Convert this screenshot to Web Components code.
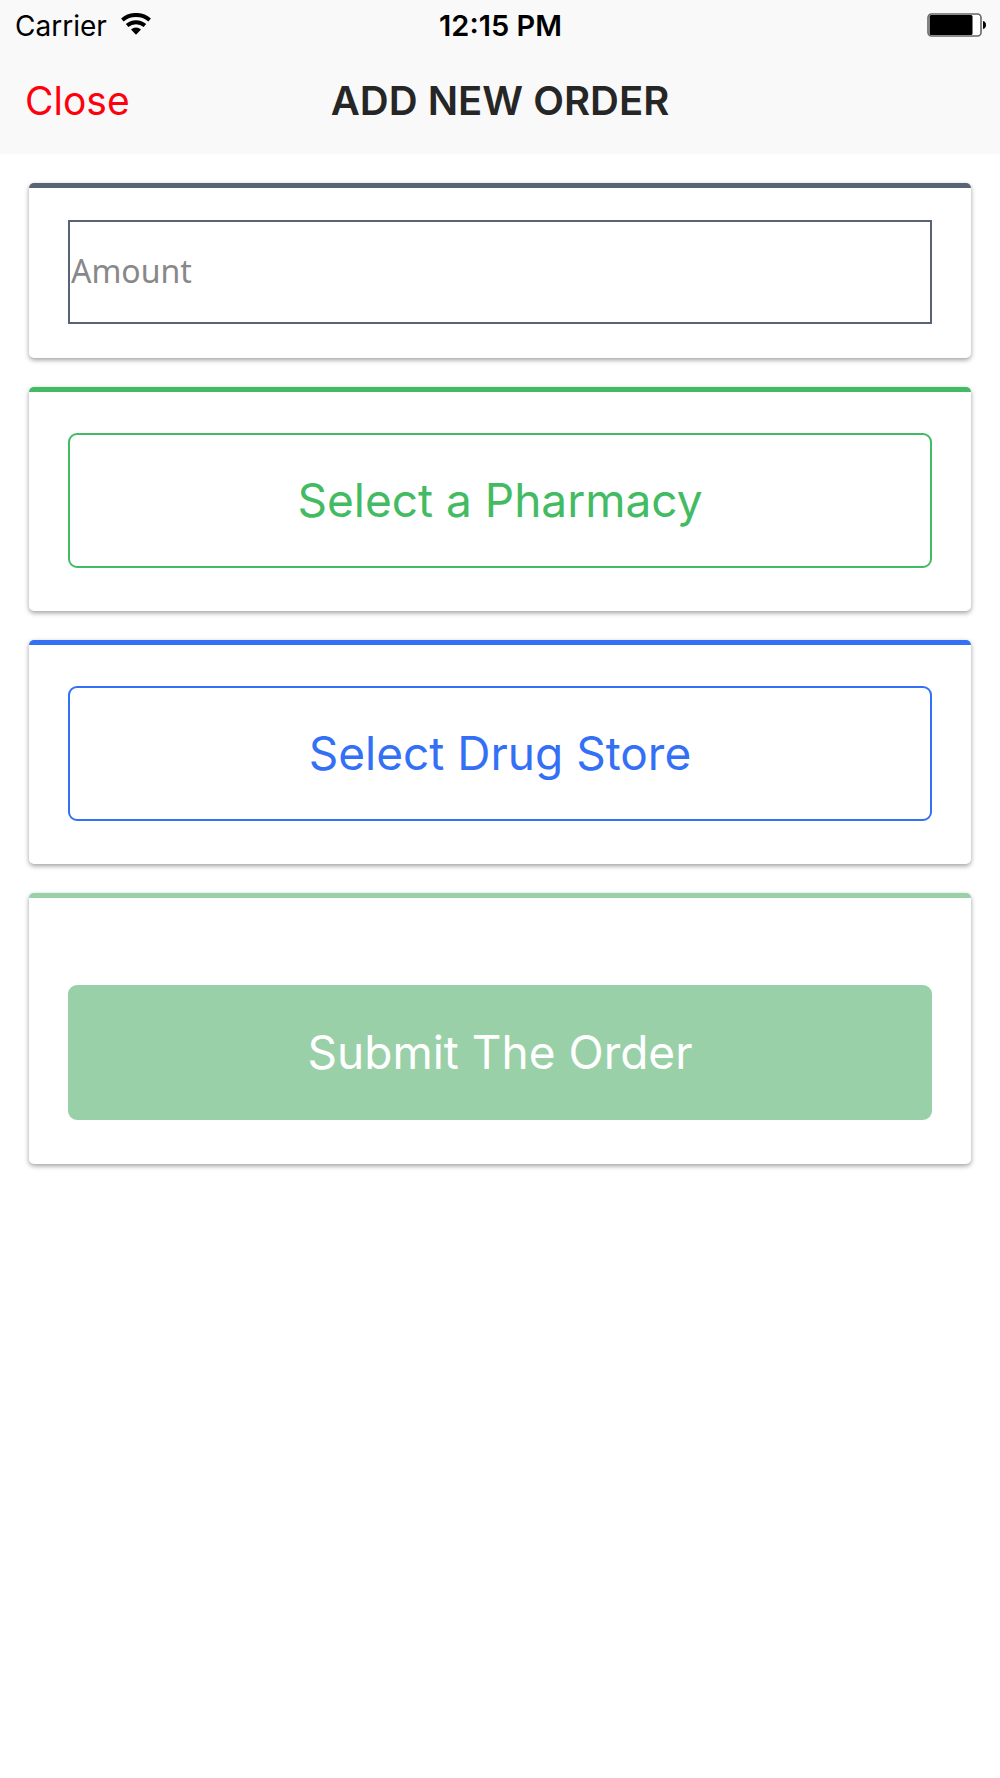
<!DOCTYPE html>
<html lang="en">
<head>
<meta charset="utf-8">
<meta name="viewport" content="width=device-width, initial-scale=1">
<title>Add New Order</title>
<style>
  body { margin: 0; background: #fff; font-family: Inter, "Liberation Sans", sans-serif; }
</style>
</head>
<body>
<order-screen></order-screen>
<script>
  function define(name, html) {
    const template = document.createElement('template');
    template.innerHTML = html;
    customElements.define(name, class extends HTMLElement {
      constructor() {
        super();
        this.attachShadow({ mode: 'open' }).append(template.content.cloneNode(true));
      }
    });
  }

  define('status-bar', `
    <style>
      :host { display: grid; grid-template-columns: 1fr auto 1fr; align-items: center; height: 52px; padding: 0 14px 0 15px; font-size: 28px; line-height: 32px; color: #000; }
      .carrier { display: flex; align-items: center; gap: 14px; }
      .carrier svg { margin-bottom: 4px; }
      .time { font-size: 29px; font-weight: 600; }
      .battery { justify-self: end; margin-bottom: 2px; }
      svg { display: block; }
    </style>
    <div class="carrier"><span>Carrier</span>
      <svg width="30" height="22" viewBox="0 0 30 22" aria-hidden="true">
        <g fill="none" stroke="#000" stroke-width="4">
          <path d="M1.400 6.900C9 .3 21 .3 28.600 6.900"/>
          <path d="M6.100 12.600C11.200 8.200 18.800 8.200 23.900 12.600"/>
        </g>
        <path d="M10 16.600C13 13.800 17 13.800 20 16.600L15 21.800Z"/>
      </svg>
    </div>
    <span class="time">12:15 PM</span>
    <svg class="battery" width="59" height="24" viewBox="0 0 59 24" aria-hidden="true">
      <rect x="1" y="1" width="53" height="22" rx="3.500" fill="#fff" stroke="#666" stroke-width="1.600"/>
      <rect x="2.500" y="2" width="43" height="20" rx="1.500"/>
      <path d="M56 8c4 .5 4 7.500 0 8z"/>
    </svg>`);

  define('nav-bar', `
    <style>
      :host { display: grid; grid-template-columns: 1fr auto 1fr; align-items: center; height: 98px; padding: 0 25px 4px; }
      h1 { margin: 0; font-size: 40px; line-height: 48px; font-weight: 600; color: #262626; }
    </style>
    <slot name="left"></slot>
    <h1><slot></slot></h1>`);

  define('text-action', `
    <style>
      :host { display: block; }
      button { padding: 0; border: 0; background: none; font: inherit; font-size: 39px; line-height: 48px; color: #ff000d; cursor: pointer; }
    </style>
    <button type="button"><slot></slot></button>`);

  define('order-card', `
    <style>
      :host { display: block; border-top: 5px solid var(--accent); border-radius: 5px; background: #fff; padding: 41px 39px 43px; box-shadow: 0 2px 5px rgba(0, 0, 0, .38); }
      :host([kind="field"]) { padding: 32px 39px 34px; }
      :host([kind="submit"]) { padding: 87px 39px 44px; }
    </style>
    <slot></slot>`);

  define('amount-field', `
    <style>
      :host { display: block; }
      input { display: block; box-sizing: border-box; width: 100%; height: 104px; margin: 0; padding: 0 1px 4px; border: 2px solid var(--accent); border-radius: 0; background: #fff; outline: 0; color: #262626; font: 32px/44px "Noto Sans", "Open Sans", sans-serif; }
      input::placeholder { color: #888; opacity: 1; }
    </style>
    <input type="text" inputmode="decimal" placeholder="Amount" aria-label="Amount">`);

  define('wide-button', `
    <style>
      :host { display: block; }
      button { display: block; box-sizing: border-box; width: 100%; height: 135px; margin: 0; padding: 0 0 2px; border: 2px solid var(--accent); border-radius: 9px; background: #fff; color: var(--accent); font: inherit; font-size: 46px; line-height: 56px; cursor: pointer; }
      :host([solid]) button { background: var(--accent); color: #fff; }
    </style>
    <button type="button"><slot></slot></button>`);

  define('order-screen', `
    <style>
      :host { display: block; }
      header { background: #f9f9f9; }
      main { display: flex; flex-direction: column; gap: 29px; padding: 29px; }
      .slate { --accent: #586378; }
      .green { --accent: #43bb62; }
      .blue { --accent: #3470f6; }
      .pale { --accent: #99d0a8; }
    </style>
    <header>
      <status-bar></status-bar>
      <nav-bar><text-action slot="left">Close</text-action>ADD NEW ORDER</nav-bar>
    </header>
    <main>
      <order-card kind="field" class="slate"><amount-field></amount-field></order-card>
      <order-card class="green"><wide-button>Select a Pharmacy</wide-button></order-card>
      <order-card class="blue"><wide-button>Select Drug Store</wide-button></order-card>
      <order-card kind="submit" class="pale"><wide-button solid>Submit The Order</wide-button></order-card>
    </main>`);
</script>
</body>
</html>
